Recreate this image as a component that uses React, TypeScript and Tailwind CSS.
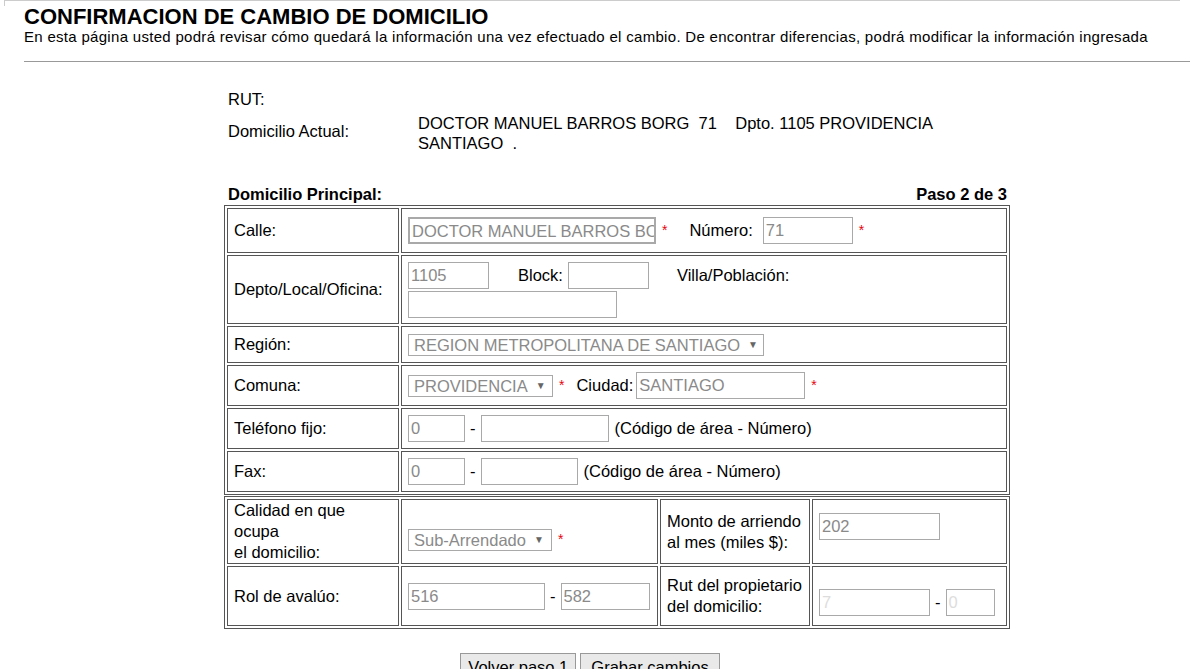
import React from "react";

const inp = "border border-[#a9a9a9] bg-white text-[#8a8a8a] px-[2px] h-[27px] text-[16.5px] leading-[25px] overflow-hidden whitespace-nowrap";
const sel = "border border-[#a9a9a9] bg-white text-[#8a8a8a] px-[5px] h-[22px] text-[16.5px] leading-[20px] whitespace-nowrap flex items-center gap-1";
const td = "border border-[#555] px-[6px] align-middle";
const Star = () => <span className="text-red-600 text-[14px] align-top ml-[6px]">*</span>;
const Tri = () => <span className="text-[10px] text-[#666] ml-1">▼</span>;

export default function App() {
  return (
    <div className="w-[1190px] h-[669px] overflow-hidden bg-white text-black text-[16.5px]" style={{ fontFamily: '"Liberation Sans", Arial, sans-serif' }}>
      <div className="border-t border-l border-[#ccc] ml-[4px] w-[1176px] h-[6px]" />
      <div className="pl-[24px]">
        <div className="text-[22px] font-bold leading-[22px]">CONFIRMACION DE CAMBIO DE DOMICILIO</div>
        <div className="text-[15px] leading-[18px] whitespace-nowrap tracking-[0.3px]">En esta página usted podrá revisar cómo quedará la información una vez efectuado el cambio. De encontrar diferencias, podrá modificar la información ingresada</div>
        <div className="border-t border-[#999] mt-[15px]" />
      </div>
      <div className="ml-[228px] mt-[25px] w-[782px]">
        <div className="flex h-[20px]"><div className="w-[190px]">RUT:</div></div>
        <div className="flex mt-[6px] h-[48px]">
          <div className="w-[190px] pt-[6px]">Domicilio Actual:</div>
          <div className="leading-[20px]">DOCTOR MANUEL BARROS BORG&nbsp; 71&nbsp;&nbsp;&nbsp; Dpto. 1105 PROVIDENCIA<br />SANTIAGO&nbsp; .</div>
        </div>
        <div className="flex justify-between font-bold mt-[22px] h-[22px] items-center">
          <span>Domicilio Principal:</span><span className="mr-[3px]">Paso 2 de 3</span>
        </div>
      </div>
      <div className="ml-[224px] w-[786px]">
        <table className="border border-[#555] border-separate border-spacing-[2px] w-full">
          <tbody>
            <tr className="h-[45px]"><td className={td + " w-[172px]"}>Calle:</td><td className={td}>
              <div className="flex items-center"><div className={inp + " w-[248px] border-2 border-[#888] bg-[#f2f2f2]"}>DOCTOR MANUEL BARROS BO</div><Star /><span className="ml-[22px] mr-[10px]">Número:</span><div className={inp + " w-[90px]"}>71</div><Star /></div>
            </td></tr>
            <tr className="h-[69px]"><td className={td}>Depto/Local/Oficina:</td><td className={td}>
              <div className="flex items-center"><div className={inp + " w-[81px]"}>1105</div><span className="ml-[29px] mr-[5px]">Block:</span><div className={inp + " w-[81px]"}></div><span className="ml-[28px]">Villa/Población:</span></div>
              <div className={inp + " w-[209px] mt-[2px]"}></div>
            </td></tr>
            <tr className="h-[37px]"><td className={td}>Región:</td><td className={td}><div className="flex"><div className={sel}>REGION METROPOLITANA DE SANTIAGO <Tri /></div></div></td></tr>
            <tr className="h-[41px]"><td className={td}>Comuna:</td><td className={td}><div className="flex items-center"><div className={sel + " w-[145px]"}>PROVIDENCIA <Tri /></div><Star /><span className="ml-[12px] mr-[3px]">Ciudad:</span><div className={inp + " w-[169px]"}>SANTIAGO</div><Star /></div></td></tr>
            <tr className="h-[41px]"><td className={td}>Teléfono fijo:</td><td className={td}><div className="flex items-center"><div className={inp + " w-[57px]"}>0</div><span className="mx-[5px]">-</span><div className={inp + " w-[128px]"}></div><span className="ml-[6px]">(Código de área - Número)</span></div></td></tr>
            <tr className="h-[41px]"><td className={td}>Fax:</td><td className={td}><div className="flex items-center"><div className={inp + " w-[57px]"}>0</div><span className="mx-[5px]">-</span><div className={inp + " w-[97px]"}></div><span className="ml-[6px]">(Código de área - Número)</span></div></td></tr>
          </tbody>
        </table>
        <table className="border border-[#555] border-separate border-spacing-[2px] w-full mt-[1px]">
          <tbody>
            <tr className="h-[57px]"><td className={td + " w-[172px] leading-[21px]"}>Calidad en que ocupa<br />el domicilio:</td><td className={td + " w-[257px]"}><div className="flex items-center mt-[16px]"><div className={sel + " w-[144px]"}>Sub-Arrendado <Tri /></div><Star /></div></td>
              <td className={td + " w-[150px] leading-[21px]"}>Monto de arriendo<br />al mes (miles $):</td><td className={td}><div className={inp + " w-[121px] -mt-[10px]"}>202</div></td></tr>
            <tr className="h-[60px]"><td className={td}>Rol de avalúo:</td><td className={td}><div className="flex items-center"><div className={inp + " w-[137px]"}>516</div><span className="mx-[5px]">-</span><div className={inp + " w-[89px]"}>582</div></div></td>
              <td className={td + " leading-[21px]"}>Rut del propietario<br />del domicilio:</td><td className={td}><div className="flex items-center mt-[12px]"><div className={inp + " w-[111px] text-[#ddd]"}>7</div><span className="mx-[5px]">-</span><div className={inp + " w-[49px] text-[#ddd]"}>0</div></div></td></tr>
          </tbody>
        </table>
      </div>
      <div className="flex justify-center gap-[4px] mt-[24px] ml-[-10px]">
        <button className="border border-[#999] bg-[#e9e9e9] px-[7px] h-[28px]">Volver paso 1</button>
        <button className="border border-[#999] bg-[#e9e9e9] px-[10px] h-[28px]">Grabar cambios</button>
      </div>
    </div>
  );
}
